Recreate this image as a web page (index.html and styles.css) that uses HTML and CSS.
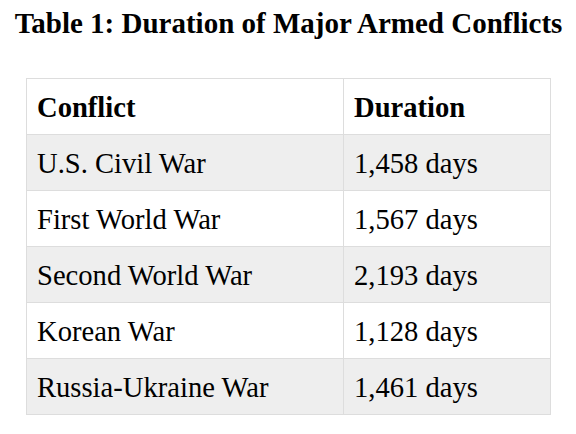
FILE: index.html
```html
<!DOCTYPE html>
<html lang="en">
<head>
    <meta charset="UTF-8">
    <meta name="viewport" content="width=device-width, initial-scale=1.0">
    <title>Duration of Major Armed Conflicts</title>
    <link rel="stylesheet" href="styles.css">
</head>
<body>
    <h1 class="caption">Table 1: Duration of Major Armed Conflicts</h1>
    <table class="conflicts">
        <thead>
            <tr>
                <th>Conflict</th>
                <th>Duration</th>
            </tr>
        </thead>
        <tbody>
            <tr><td>U.S. Civil War</td><td>1,458 days</td></tr>
            <tr><td>First World War</td><td>1,567 days</td></tr>
            <tr><td>Second World War</td><td>2,193 days</td></tr>
            <tr><td>Korean War</td><td>1,128 days</td></tr>
            <tr><td>Russia-Ukraine War</td><td>1,461 days</td></tr>
        </tbody>
    </table>
</body>
</html>
```

FILE: styles.css
```css
body {
    font-family: "Liberation Serif", "Times New Roman", serif;
    background-color: #ffffff;
    color: #000;
    margin: 0;
    padding: 0 25px 0 26px;
}
.caption {
    font-size: 29px;
    font-weight: bold;
    text-align: center;
    margin: 7px -20px 38px;
    white-space: nowrap;
}
.conflicts {
    width: 100%;
    border-collapse: collapse;
    font-size: 28.6px;
}
.conflicts th,
.conflicts td {
    border: 1px solid #dddddd;
    padding: 3px 10px 0;
    height: 52px;
    text-align: left;
}
.conflicts th {
    font-weight: bold;
}
.conflicts th:first-child,
.conflicts td:first-child {
    width: 296px;
}
.conflicts tbody tr:nth-child(odd) {
    background-color: #eeeeee;
}
```
